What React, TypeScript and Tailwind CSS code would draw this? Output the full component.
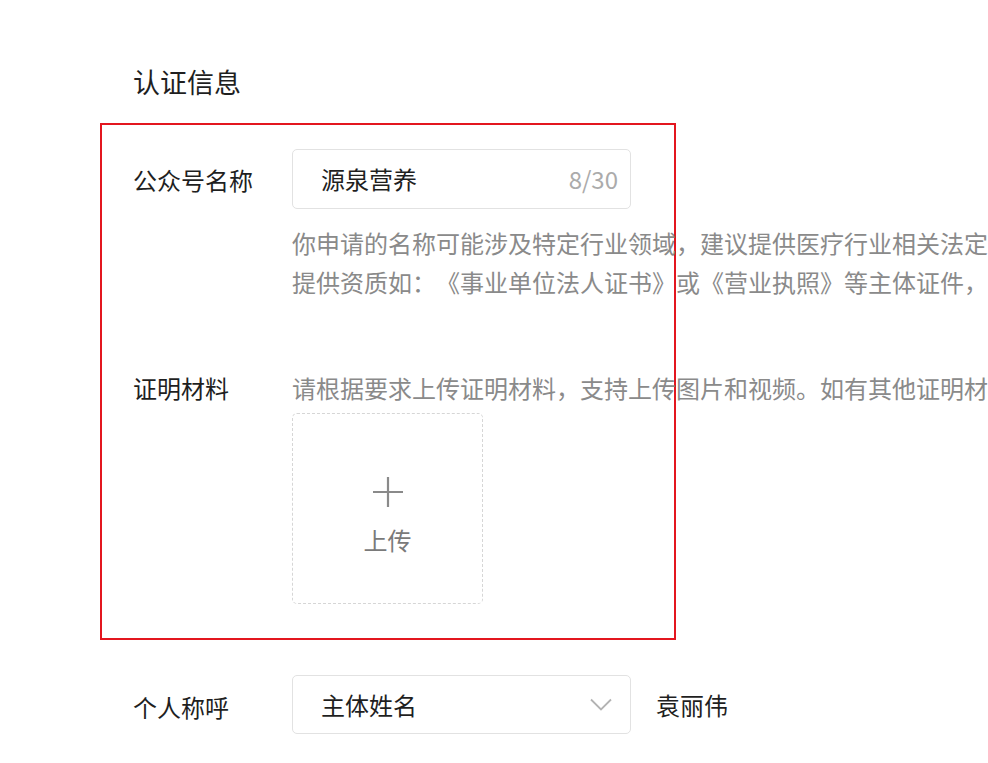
const font = { fontFamily: '"Noto Sans CJK SC", "Noto Sans", sans-serif' };

function Label({ children }: { children: React.ReactNode }) {
  return <div className="w-[159px] shrink-0 text-[24px] leading-[39px] text-[#1f1f1f]">{children}</div>;
}

export default function App() {
  return (
    <div className="w-[988px] h-[763px] overflow-hidden bg-white [text-spacing-trim:space-all]" style={font}>
      <div className="pt-[62px] pl-[133px] text-[27px] leading-[40px] text-[#1f1f1f]">认证信息</div>

      {/* highlighted section */}
      <div className="mt-[21px] ml-[100px] w-[576px] border-2 border-[#e3161f] pl-[31px] pt-[24px] pb-[34px]">
        <div className="flex items-center">
          <Label>公众号名称</Label>
          <div className="w-[339px] h-[60px] shrink-0 flex items-center justify-between rounded-[5px] border border-[#e2e2e2] pl-[28px] pr-[12px]">
            <span className="text-[24px] text-[#1f1f1f]">源泉营养</span>
            <span className="text-[24px] text-[#ababab]">8/30</span>
          </div>
        </div>
        <div className="ml-[159px] mt-[14px] whitespace-nowrap text-[24px] leading-[39px] text-[#8a8a8a]">
          <div>你申请的名称可能涉及特定行业领域，建议提供医疗行业相关法定证明材料</div>
          <div>提供资质如：《事业单位法人证书》或《营业执照》等主体证件，以便审核</div>
        </div>

        <div className="mt-[67px] flex items-start">
          <Label>证明材料</Label>
          <div className="flex flex-col">
            <div className="whitespace-nowrap text-[24px] leading-[39px] text-[#8a8a8a]">
              请根据要求上传证明材料，支持上传图片和视频。如有其他证明材料可一并上传
            </div>
            <div className="mt-[6px] w-[191px] h-[191px] rounded-[5px] border border-dashed border-[#d6d6d6] flex flex-col items-center pt-[62px]">
              <svg width="32" height="32" viewBox="0 0 32 32" className="text-[#8a8a8a]">
                <path d="M16 1v30M1 16h30" stroke="currentColor" strokeWidth="2.2" fill="none" />
              </svg>
              <span className="mt-[17px] text-[24px] leading-[30px] text-[#7a7a7a]">上传</span>
            </div>
          </div>
        </div>
      </div>

      <div className="mt-[35px] pl-[133px] flex items-center">
        <div className="w-[159px] shrink-0 text-[24px] leading-[39px] text-[#1f1f1f] pt-[4px]">个人称呼</div>
        <div className="w-[339px] h-[59px] shrink-0 flex items-center justify-between rounded-[5px] border border-[#e2e2e2] pl-[28px] pr-[18px]">
          <span className="text-[24px] text-[#1f1f1f]">主体姓名</span>
          <svg width="22" height="13" viewBox="0 0 22 13" className="text-[#b3b3b3]">
            <path d="M1 1.5l10 10 10-10" stroke="currentColor" strokeWidth="1.8" fill="none" />
          </svg>
        </div>
        <span className="ml-[25px] text-[24px] text-[#1f1f1f]">袁丽伟</span>
      </div>
    </div>
  );
}
